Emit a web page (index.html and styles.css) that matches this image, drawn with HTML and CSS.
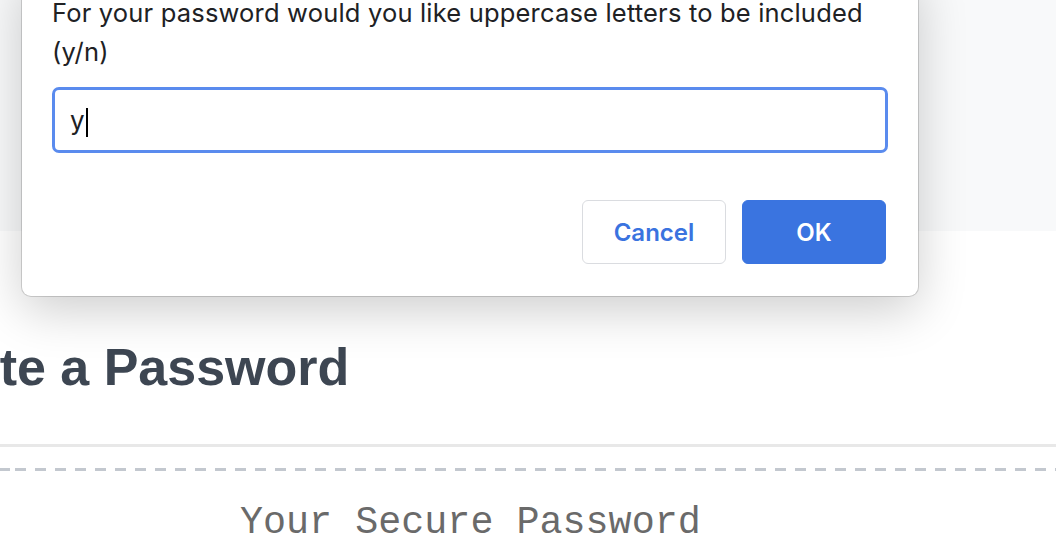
FILE: index.html
```html
<!DOCTYPE html>
<html lang="en">
<head>
<meta charset="utf-8">
<title>Password Generator</title>
<link rel="stylesheet" href="styles.css">
</head>
<body>
  <div class="page">
    <header class="band"></header>
    <main class="content">
      <h1 class="title">Create a Password</h1>
      <div class="rule"></div>
      <div class="dashed"></div>
      <p class="secure">Your Secure Password</p>
    </main>
  </div>

  <div class="dialog" role="dialog">
    <p class="message">For your password would you like uppercase letters to be included (y/n)</p>
    <div class="field"><span class="value">y</span><span class="caret"></span></div>
    <div class="actions">
      <button class="btn btn-cancel">Cancel</button>
      <button class="btn btn-ok">OK</button>
    </div>
  </div>
</body>
</html>
```

FILE: styles.css
```css
* { box-sizing: border-box; }

html, body {
  margin: 0;
  padding: 0;
  height: 542px;
  overflow: hidden;
  background: #ffffff;
  font-family: "Liberation Sans", Arial, sans-serif;
}

.page {
  display: flex;
  flex-direction: column;
}

.band {
  height: 231px;
  background: #f8f9fa;
}

.content {
  display: flex;
  flex-direction: column;
}

.title {
  margin: 106px 0 0 -116px;
  font-size: 52px;
  font-weight: 700;
  line-height: normal;
  color: #3d4652;
  white-space: nowrap;
}

.rule {
  margin-top: 47px;
  height: 3px;
  background: #e8e8e8;
}

.dashed {
  margin-top: 21px;
  height: 3px;
  background: repeating-linear-gradient(90deg, #c3c8cf 0 11px, transparent 11px 20px);
  background-position: 15px 0;
}

.secure {
  margin: 30px 0 0 240px;
  font-family: "Liberation Mono", "Courier New", monospace;
  font-size: 38.4px;
  line-height: normal;
  color: #6a6a6a;
  white-space: nowrap;
}

.dialog {
  position: absolute;
  left: 22px;
  top: -30px;
  width: 896px;
  padding: 23px 30px 32px 30px;
  background: #ffffff;
  border-radius: 9px;
  box-shadow: 0 0 0 1px rgba(0, 0, 0, 0.15), 0 14px 50px rgba(0, 0, 0, 0.2);
  display: flex;
  flex-direction: column;
  font-family: Inter, "Liberation Sans", Arial, sans-serif;
}

.message {
  margin: 0;
  font-size: 25.5px;
  letter-spacing: 0.18px;
  line-height: 39px;
  color: #202124;
}

.field {
  margin-top: 16px;
  height: 66px;
  border: 3px solid #5a8bee;
  border-radius: 7px;
  padding-left: 15px;
  display: flex;
  align-items: center;
  font-size: 26px;
  color: #202124;
}

.value {
  line-height: 1;
  padding-top: 2px;
}

.caret {
  display: inline-block;
  width: 2px;
  height: 29px;
  margin-left: 1px;
  margin-top: 4px;
  background: #000000;
}

.actions {
  margin-top: 47px;
  margin-right: 2px;
  display: flex;
  justify-content: flex-end;
  gap: 16px;
}

.btn {
  width: 144px;
  height: 64px;
  border-radius: 6px;
  font-family: Inter, "Liberation Sans", Arial, sans-serif;
  font-size: 24px;
  font-weight: 600;
  cursor: pointer;
}

.btn-cancel {
  background: #ffffff;
  border: 1px solid #dadce0;
  color: #3a73df;
}

.btn-ok {
  background: #3a74e0;
  border: 1px solid #3a74e0;
  color: #ffffff;
}
```
